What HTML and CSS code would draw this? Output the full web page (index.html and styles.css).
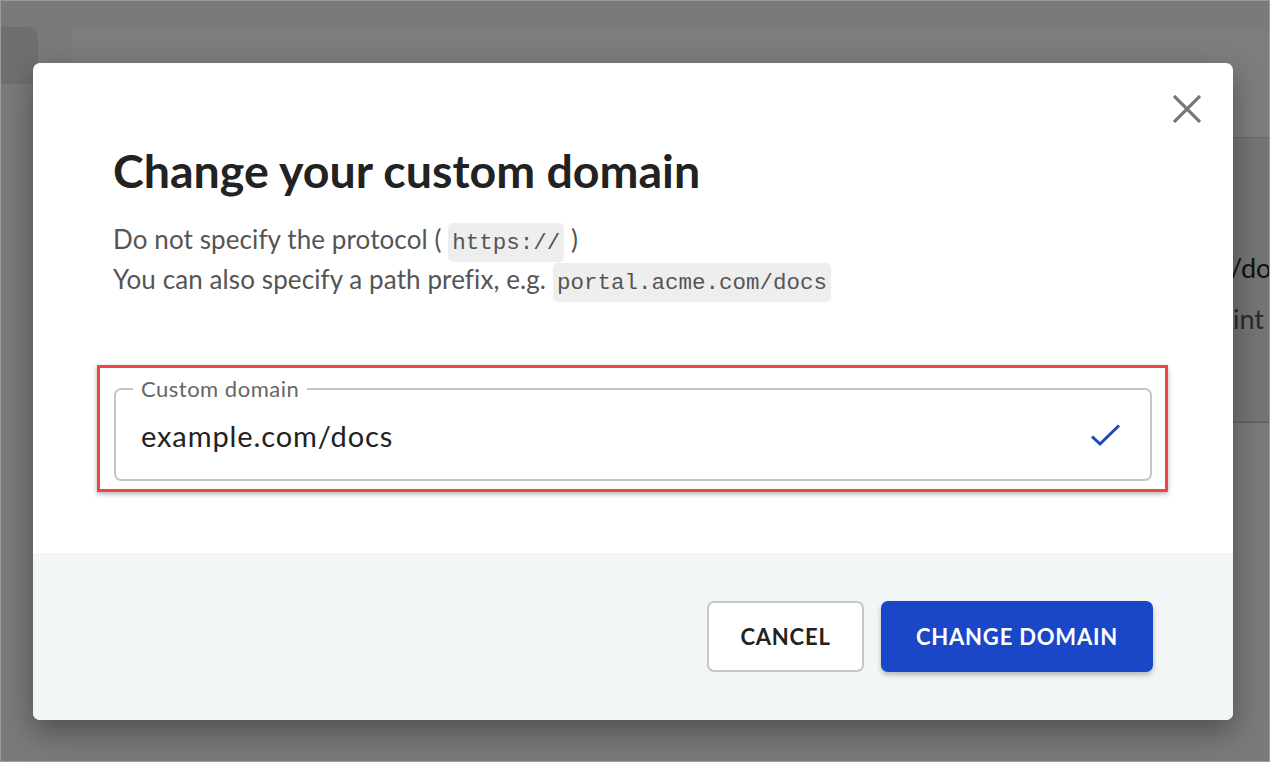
FILE: index.html
```html
<!DOCTYPE html>
<html lang="en">
<head>
<meta charset="utf-8">
<title>Change your custom domain</title>
<link rel="stylesheet" href="styles.css">
</head>
<body>
<div class="screen">
  <div class="app">
    <aside class="side-card"></aside>
    <main class="main-card">
      <div class="main-head"></div>
      <div class="main-panel">
        <div class="panel-line panel-title">/docs</div>
        <div class="panel-line panel-sub">int your domain</div>
      </div>
    </main>
  </div>

  <div class="overlay">
    <div class="modal" role="dialog" aria-labelledby="dlg-title">
      <button class="close" aria-label="Close">
        <svg width="28" height="28" viewBox="0 0 28 28"><path d="M1 1 L27 27 M27 1 L1 27" stroke="#777" stroke-width="3.2" fill="none"/></svg>
      </button>
      <div class="modal-body">
        <h1 class="title" id="dlg-title">Change your custom domain</h1>
        <p class="desc">Do not specify the protocol ( <code class="chip">https://</code> )<br>You can also specify a path prefix, e.g. <code class="chip">portal.acme.com/docs</code></p>
        <div class="highlight">
          <fieldset class="field">
            <legend class="field-label">Custom domain</legend>
            <div class="field-row">
              <span class="field-value">example.com/docs</span>
              <svg class="check" width="32" height="24" viewBox="0 0 32 24"><path d="M2 12.5 L10 20 L29 1.5" stroke="#1a47c8" stroke-width="3" fill="none"/></svg>
            </div>
          </fieldset>
        </div>
      </div>
      <div class="modal-foot">
        <button class="btn btn-cancel">CANCEL</button>
        <button class="btn btn-primary">CHANGE DOMAIN</button>
      </div>
    </div>
  </div>
</div>
</body>
</html>
```

FILE: styles.css
```css
* { box-sizing: border-box; }
html, body { margin: 0; padding: 0; }
body {
  font-family: "Lato", "Noto Sans", sans-serif;
  background: #f3f5f4;
}
.screen {
  position: relative;
  width: 1270px;
  height: 762px;
  overflow: hidden;
  border: 1px solid #9a9a9a;
  background: #f3f5f4;
}
.app {
  display: flex;
  gap: 33px;
  padding-top: 26px;
  height: 100%;
}
.side-card {
  flex: 0 0 37px;
  height: 57px;
  background: #dcdfdf;
  border-radius: 0 10px 10px 0;
}
.main-card {
  flex: 1;
  min-width: 0;
  overflow: hidden;
  background: #fafafa;
  border-radius: 10px 0 0 0;
  height: 396px;
  display: flex;
  flex-direction: column;
}
.main-head {
  height: 111px;
  border-bottom: 1px solid #d8d8d8;
}
.main-panel {
  flex: 1;
  background: #e8e8e8;
  border-bottom: 2px solid #c8c8c8;
  padding: 113px 0 0 1159px;
  white-space: nowrap;
}
.panel-line { font-size: 27px; color: #222; }
.panel-sub { color: #555; margin-top: 18px; padding-left: 3px; }

.overlay {
  position: absolute;
  inset: 0;
  background: rgba(0, 0, 0, 0.5);
  padding: 62px 0 0 32px;
}
.modal {
  position: relative;
  width: 1200px;
  height: 657px;
  background: #fff;
  border-radius: 7px;
  overflow: hidden;
  display: flex;
  flex-direction: column;
  box-shadow: 0 12px 30px rgba(0, 0, 0, 0.35);
}
.close {
  position: absolute;
  top: 32px;
  right: 32px;
  padding: 0;
  border: 0;
  background: none;
  width: 28px;
  height: 28px;
}
.close svg { display: block; }
.modal-body {
  flex: 1;
  padding: 81px 80px 0 80px;
}
.title {
  margin: 0;
  font-size: 46.5px;
  line-height: 52px;
  font-weight: 700;
  color: #222;
}
.desc {
  margin: 23px 0 0;
  font-size: 26px;
  letter-spacing: 0.1px;
  line-height: 40px;
  color: #555;
}
.chip {
  font-family: "Liberation Mono", monospace;
  font-size: 22.5px;
  line-height: 20px;
  letter-spacing: 0;
  background: #eeeeee;
  color: #555;
  border-radius: 5px;
  padding: 7px 4px 6px;
}
.highlight {
  margin: 66px 0 0 -16px;
  width: 1071px;
  border: 3px solid #f04545;
  padding: 10px 13px 8px 14px;
  box-shadow: 0 2px 5px rgba(0, 0, 0, 0.3);
}
.field {
  margin: 0;
  border: 2px solid #c6c6c6;
  border-radius: 7px;
  padding: 0 28px 14px 25px;
  height: 103px;
}
.field-label {
  margin-left: -8px;
  padding: 0 8px;
  font-size: 22px;
  letter-spacing: 0.5px;
  line-height: 22px;
  color: #666;
}
.field-row {
  display: flex;
  align-items: center;
  justify-content: space-between;
  height: 66px;
  padding-top: 5px;
}
.field-value {
  font-size: 29px;
  letter-spacing: 0.9px;
  color: #222;
}
.check { display: block; }
.modal-foot {
  height: 167px;
  background: #f3f6f7;
  display: flex;
  justify-content: flex-end;
  align-items: center;
  gap: 17px;
  padding: 0 80px;
}
.btn {
  height: 71px;
  border-radius: 7px;
  font-family: "Lato", "Noto Sans", sans-serif;
  font-size: 22px;
  font-weight: 700;
  letter-spacing: 0.8px;
}
.btn-cancel {
  width: 157px;
  background: #fff;
  border: 2px solid #c6c6c6;
  color: #222;
}
.btn-primary {
  width: 272px;
  background: #1a47c8;
  border: 0;
  color: #fff;
  box-shadow: 0 3px 5px rgba(0, 0, 0, 0.25);
}
```
